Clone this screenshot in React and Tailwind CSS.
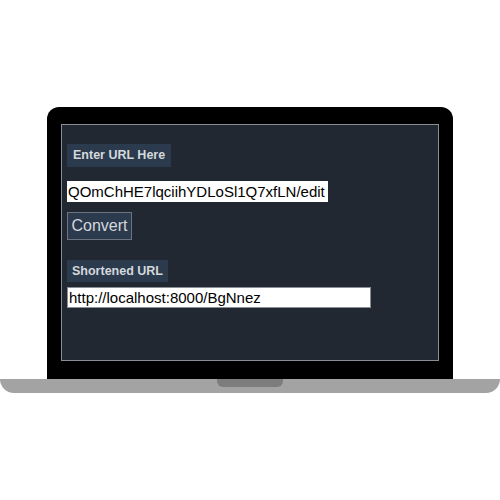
export default function App() {
  return (
    <div className="w-[500px] h-[500px] bg-white flex flex-col items-center pt-[107px]" style={{ fontFamily: '"Liberation Sans", Arial, sans-serif' }}>
      <div className="w-[406px] h-[272px] bg-black rounded-t-[12px] pt-[17px] px-[14px] pb-[18px] flex">
        <div className="flex-1 border border-[#8a8f96] bg-[#222831] px-[5px] pt-[19px] flex flex-col items-start">
          <div className="h-[23px] px-[6px] bg-[#2b3a4c] text-[#d4d8dd] text-[12.5px] font-bold flex items-center">Enter URL Here</div>
          <div className="mt-[14px] w-[261px] h-[21px] bg-white text-black text-[15px] leading-[21px] pl-[1px] overflow-hidden whitespace-nowrap">QOmChHE7lqciihYDLoSl1Q7xfLN/edit</div>
          <div className="mt-[10px] h-[28px] w-[65px] border border-[#6b7480] bg-[#2b3a4c] text-[#d4d8dd] text-[16px] flex items-center justify-center">Convert</div>
          <div className="mt-[20px] h-[22px] px-[5px] bg-[#2b3a4c] text-[#d4d8dd] text-[12.5px] font-bold flex items-center">Shortened URL</div>
          <div className="mt-[5px] w-[304px] h-[21px] bg-white border border-[#8a8f96] text-black text-[15px] leading-[19px] pl-[1px] overflow-hidden whitespace-nowrap">http://localhost:8000/BgNnez</div>
        </div>
      </div>
      <div className="w-[500px] h-[14px] bg-[#a3a3a3] rounded-bl-[14px] rounded-br-[14px] flex justify-center">
        <div className="w-[66px] h-[8px] bg-[#7d7d7d] rounded-b-[6px]"></div>
      </div>
    </div>
  );
}
